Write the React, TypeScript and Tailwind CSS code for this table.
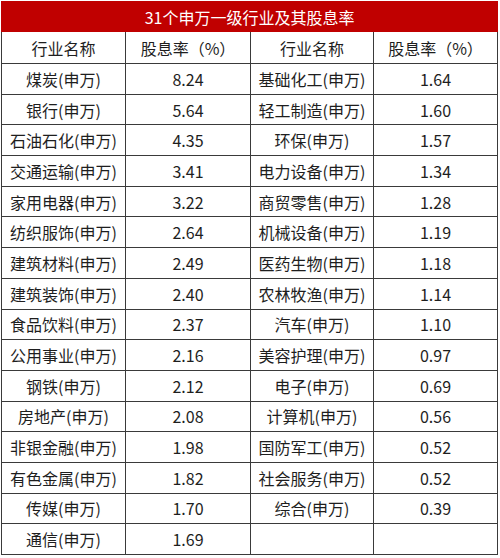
import React from 'react';

const left = [
  ['煤炭(申万)', '8.24'],
  ['银行(申万)', '5.64'],
  ['石油石化(申万)', '4.35'],
  ['交通运输(申万)', '3.41'],
  ['家用电器(申万)', '3.22'],
  ['纺织服饰(申万)', '2.64'],
  ['建筑材料(申万)', '2.49'],
  ['建筑装饰(申万)', '2.40'],
  ['食品饮料(申万)', '2.37'],
  ['公用事业(申万)', '2.16'],
  ['钢铁(申万)', '2.12'],
  ['房地产(申万)', '2.08'],
  ['非银金融(申万)', '1.98'],
  ['有色金属(申万)', '1.82'],
  ['传媒(申万)', '1.70'],
  ['通信(申万)', '1.69'],
];

const right = [
  ['基础化工(申万)', '1.64'],
  ['轻工制造(申万)', '1.60'],
  ['环保(申万)', '1.57'],
  ['电力设备(申万)', '1.34'],
  ['商贸零售(申万)', '1.28'],
  ['机械设备(申万)', '1.19'],
  ['医药生物(申万)', '1.18'],
  ['农林牧渔(申万)', '1.14'],
  ['汽车(申万)', '1.10'],
  ['美容护理(申万)', '0.97'],
  ['电子(申万)', '0.69'],
  ['计算机(申万)', '0.56'],
  ['国防军工(申万)', '0.52'],
  ['社会服务(申万)', '0.52'],
  ['综合(申万)', '0.39'],
  ['', ''],
];

const cell = 'border border-[#3a3a3a] text-center p-0 align-middle';

export default function App() {
  return (
    <div
      className="w-[500px] h-[558px] bg-white pl-px pt-px"
      style={{ fontFamily: '"Noto Sans CJK SC", "Noto Sans", sans-serif' }}
    >
      <table className="w-[496px] table-fixed border-collapse text-[16px] text-[#1e1e1e]">
        <colgroup>
          <col className="w-[124px]" />
          <col className="w-[125px]" />
          <col className="w-[123px]" />
          <col className="w-[124px]" />
        </colgroup>
        <thead>
          <tr className="h-[30px]">
            <th colSpan={4} className="bg-[#c00000] text-white font-normal text-center border border-[#c00000]">
              31个申万一级行业及其股息率
            </th>
          </tr>
          <tr className="h-[32px]">
            <th className={`${cell} font-normal`}>行业名称</th>
            <th className={`${cell} font-normal`}>股息率（%）</th>
            <th className={`${cell} font-normal`}>行业名称</th>
            <th className={`${cell} font-normal`}>股息率（%）</th>
          </tr>
        </thead>
        <tbody>
          {left.map((row, i) => (
            <tr key={row[0]} className="h-[30.7px]">
              <td className={cell}>{row[0]}</td>
              <td className={cell}>{row[1]}</td>
              <td className={cell}>{right[i][0]}</td>
              <td className={cell}>{right[i][1]}</td>
            </tr>
          ))}
        </tbody>
      </table>
    </div>
  );
}
